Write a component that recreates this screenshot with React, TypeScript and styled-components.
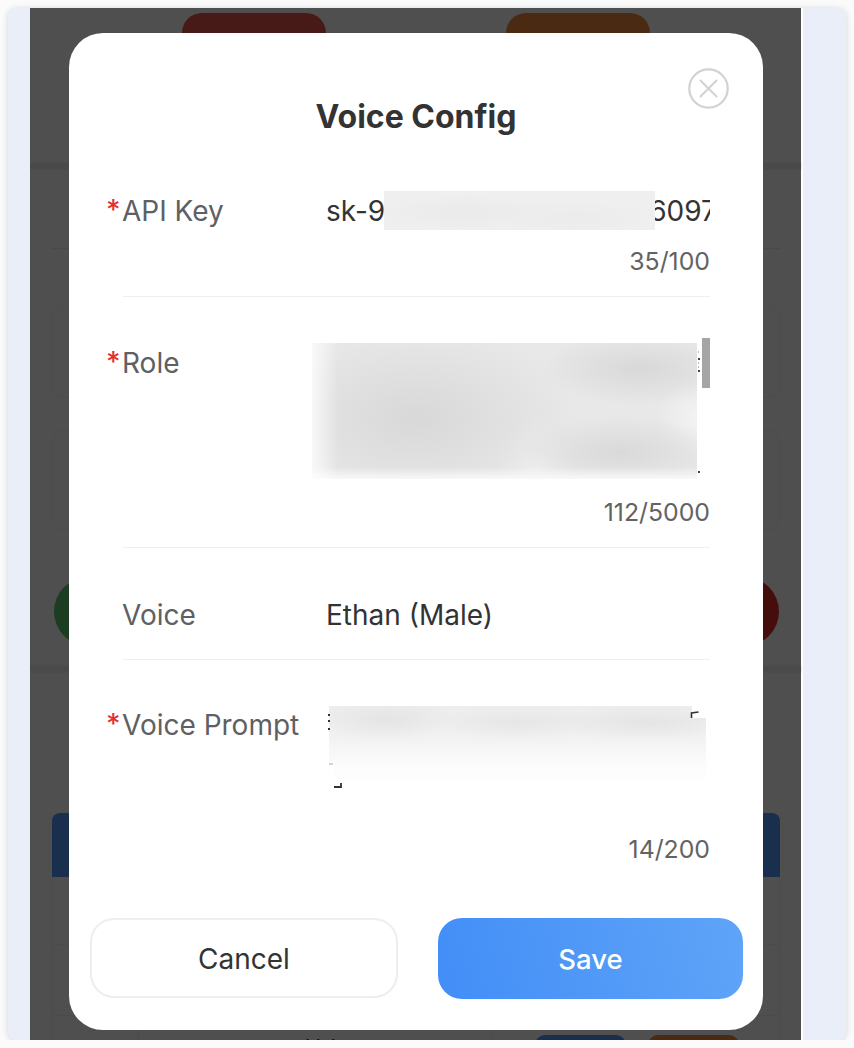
import React from "react";
import styled, { createGlobalStyle } from "styled-components";

const Global = createGlobalStyle`
  html, body { margin: 0; padding: 0; background: #fbfbfb; }
  body { font-family: Inter, "Noto Sans", "Liberation Sans", sans-serif; }
  * { box-sizing: border-box; }
`;

const Shell = styled.div`
  width: 838px; height: 1032px; margin: 8px 0 0 8px;
  background: #e9eef8; border-radius: 8px; overflow: hidden;
  box-shadow: 0 1px 7px rgba(0,0,0,.16);
  padding-left: 22px;
`;
const Stage = styled.div`
  position: relative; width: 773px; height: 1032px; overflow: hidden;
  background: #fff; border-right: 1px solid #fff;
`;
const Backdrop = styled.div`
  position: absolute; inset: 0 1px 0 0; background: rgba(0,0,0,.69);
`;

/* page behind the dialog */
const TopBar = styled.div`
  height: 154px; padding: 5px 0 0 152px; display: flex; gap: 180px;
`;
const Pill = styled.div<{ $c: string }>`
  width: 144px; height: 80px; border-radius: 20px; background: ${p => p.$c};
`;
const Band = styled.div`
  height: 8px;
  background: linear-gradient(180deg, #f4f4f4, #eaeaea 50%, #f4f4f4);
`;
const Section = styled.div`padding: 78px 21px 0;`;
const Rule = styled.div`height: 1px; background: #eaeaea;`;
const Card = styled.div<{ $h: number; $m: number }>`
  height: ${p => p.$h}px; margin-top: ${p => p.$m}px;
  border: 1px solid #f1f1f1; border-radius: 14px;
`;
const Circles = styled.div`
  display: flex; justify-content: space-between; padding: 47px 2px 0 3px;
`;
const Circle = styled.div<{ $c: string }>`
  width: 69px; height: 69px; border-radius: 50%; background: ${p => p.$c};
`;
const Gap = styled.div<{ $h: number }>`height: ${p => p.$h}px;`;
const TableHead = styled.div`
  height: 64px; margin: 0 22px 0 22px; background: #5494fc; border-radius: 8px 8px 0 0;
`;
const TableRow = styled.div<{ $h: number }>`
  height: ${p => p.$h}px; margin: 0 22px; display: grid; grid-template-columns: 86px 353px 1fr;
  border: 1px solid #f2f2f2; border-top: 0;
`;
const Cell = styled.div<{ $left?: number; $top?: number }>`
  border-right: 1px solid #f2f2f2; display: flex; gap: 22px;
  padding: ${p => p.$top ?? 19}px 0 0 ${p => p.$left ?? 43}px;
  font-size: 20px; color: #222; line-height: 24px;
  &:last-child { border-right: 0; }
`;
const SmallBtn = styled.div<{ $c: string }>`
  width: 91px; height: 40px; border-radius: 10px; background: ${p => p.$c}; flex: none;
`;

/* dialog */
const Modal = styled.div`
  position: absolute; left: 39px; top: 25px; width: 694px; height: 997px;
  background: #fff; border-radius: 34px;
`;
const Header = styled.div`
  height: 137px; padding-top: 63px; text-align: center;
  font-size: 32px; line-height: 42px; font-weight: 700; color: #333;
`;
const CloseButton = styled.button`
  position: absolute; top: 35px; right: 34.5px; width: 41px; height: 41px;
  padding: 0; border: 0; background: none; display: block;
`;
const Row = styled.div<{ $top: number; $bottom: number; $noRule?: boolean }>`
  margin: 0 53px 0 54px; padding: ${p => p.$top}px 0 ${p => p.$bottom}px;
  display: grid; grid-template-columns: 204px 1fr;
  border-bottom: ${p => (p.$noRule ? "0" : "1px solid #efefef")};
`;
const Label = styled.div<{ $offset?: number }>`
  margin-top: ${p => p.$offset ?? 0}px; margin-left: -1px;
  font-size: 28px; line-height: 34px; color: #5f6063; white-space: nowrap;
`;
const Star = styled.span`
  display: inline-block; width: 16px; margin-left: -16px;
  color: #e5302f; font-size: 28px; font-weight: 500; line-height: 34px;
  vertical-align: top; position: relative; top: -1px;
`;
const Field = styled.div`min-width: 0; margin-left: -1px;`;
const Value = styled.div`
  height: 34px; overflow: hidden; white-space: nowrap;
  font-size: 28px; line-height: 34px; color: #333;
`;
const MaskedRun = styled.span`display: inline-block; width: 264px;`;
const Box = styled.div<{ $h: number }>`position: relative; height: ${p => p.$h}px;`;
const Counter = styled.div<{ $top: number }>`
  margin-top: ${p => p.$top}px; text-align: right;
  font-size: 24.8px; line-height: 34px; color: #636363;
`;
const KeyRedaction = styled.div`
  position: absolute; left: 58px; top: -3px; width: 271px; height: 39px;
  background:
    radial-gradient(ellipse 90px 18px at 30% 55%, #eaeaea, transparent),
    radial-gradient(ellipse 80px 18px at 70% 70%, #ebebeb, transparent),
    #efefef;
`;
const RoleRedaction = styled.div`
  position: absolute; left: -14px; top: 5px; width: 385px; height: 136px;
  background:
    linear-gradient(90deg, rgba(255,255,255,.75) 0, rgba(255,255,255,0) 26px),
    linear-gradient(0deg, #f8f8f8 0, rgba(248,248,248,0) 12px),
    radial-gradient(ellipse 160px 90px at 27% 55%, #d8d8d8, transparent),
    radial-gradient(ellipse 100px 36px at 85% 19%, #d8d8d8, transparent),
    radial-gradient(ellipse 100px 36px at 80% 80%, #d9d9d9, transparent),
    radial-gradient(ellipse 40px 40px at 100% 55%, #f3f3f3, transparent),
    radial-gradient(ellipse 40px 50px at 58% 92%, #efefef, transparent),
    #e8e8e8;
`;
const PromptRedaction = styled.div`
  position: absolute; left: 3px; top: -2px; width: 377px; height: 75px;
  clip-path: polygon(0 0, 363px 0, 363px 12px, 377px 12px, 377px 75px, 5px 75px, 5px 58px, 0 58px);
  background:
    radial-gradient(ellipse 70px 20px at 15% 18%, #e4e4e4, transparent),
    radial-gradient(ellipse 90px 16px at 50% 22%, #e6e6e6, transparent),
    radial-gradient(ellipse 90px 18px at 84% 22%, #e4e4e4, transparent),
    linear-gradient(180deg, #ededed 0, #f1f1f1 40%, #fbfbfb 75%, #fefefe 100%);
`;
const Thumb = styled.div`
  position: absolute; right: 0; top: 0; width: 8px; height: 50px; background: #a5a5a5;
`;
const Specks = styled.svg`
  position: absolute; left: 0; top: 0; width: 383px; height: 150px; overflow: visible; pointer-events: none;
`;
const Footer = styled.div`
  display: flex; gap: 40px; padding: 52px 20px 0 21px;
`;
const Cancel = styled.button`
  width: 308px; height: 80px; border-radius: 24px; background: #fff; padding: 2px 0 0;
  border: 2px solid #eeeef0; color: #333;
  font: 400 28px Inter, sans-serif;
`;
const Save = styled.button`
  width: 305px; height: 81px; border-radius: 24px; border: 0; color: #fff; padding: 1px 0 0;
  background: linear-gradient(75deg, #428ef7 0%, #5fa4f8 100%);
  font: 500 27.5px Inter, sans-serif;
`;

export default function App() {
  return (
    <>
      <Global />
      <Shell>
        <Stage>
          <TopBar>
            <Pill $c="#e8544c" />
            <Pill $c="#ef873a" />
          </TopBar>
          <Band />
          <Section>
            <Rule />
            <Card $h={91} $m={58} />
            <Card $h={100} $m={32} />
            <Circles>
              <Circle $c="#5ac46e" />
              <Circle $c="#df2d27" />
            </Circles>
          </Section>
          <Gap $h={19} />
          <Band />
          <Gap $h={140} />
          <TableHead />
          <TableRow $h={68}><Cell /><Cell /><Cell /></TableRow>
          <TableRow $h={71}><Cell /><Cell /><Cell /></TableRow>
          <TableRow $h={60}>
            <Cell />
            <Cell $left={167} $top={19}>Voice</Cell>
            <Cell>
              <SmallBtn $c="#5494fc" />
              <SmallBtn $c="#ef873a" />
            </Cell>
          </TableRow>
          <Backdrop />
          <Modal>
            <Header>Voice Config</Header>
            <CloseButton aria-label="Close">
              <svg width="41" height="41" viewBox="0 0 41 41" fill="none" stroke="#d0d2d6" strokeWidth="2.2">
                <circle cx="20.5" cy="20.5" r="19.2" />
                <path d="M12.5 12.5 L28.5 28.5 M28.5 12.5 L12.5 28.5" strokeLinecap="round" strokeWidth="2" />
              </svg>
            </CloseButton>

            <Row $top={24} $bottom={18}>
              <Label><Star>*</Star>API Key</Label>
              <Field>
                <Box $h={34}>
                  <Value>sk-9<MaskedRun />6097f</Value>
                  <KeyRedaction />
                </Box>
                <Counter $top={16}>35/100</Counter>
              </Field>
            </Row>

            <Row $top={41} $bottom={18}>
              <Label $offset={8}><Star>*</Star>Role</Label>
              <Field>
                <Box $h={142}>
                  <RoleRedaction />
                  <Thumb />
                  <Specks viewBox="0 0 383 150">
                    <g fill="#444">
                      <rect x="372" y="20" width="2" height="2" />
                      <rect x="372" y="32" width="2" height="2" />
                      <rect x="372" y="133" width="2" height="2" />
                    </g>
                    <g fill="#bbb">
                      <rect x="372" y="13" width="1" height="2" />
                      <rect x="372" y="24" width="1" height="2" />
                      <rect x="372" y="28" width="1" height="2" />
                    </g>
                  </Specks>
                </Box>
                <Counter $top={15}>112/5000</Counter>
              </Field>
            </Row>

            <Row $top={50} $bottom={27}>
              <Label>Voice</Label>
              <Field>
                <Value>Ethan (Male)</Value>
              </Field>
            </Row>

            <Row $top={48} $bottom={0} $noRule>
              <Label><Star>*</Star>Voice Prompt</Label>
              <Field>
                <Box $h={108}>
                  <PromptRedaction />
                  <Specks viewBox="0 0 383 150">
                    <g fill="#333">
                      <rect x="2" y="6" width="2" height="2" />
                      <rect x="2" y="12" width="2" height="2" />
                      <rect x="2" y="20" width="2" height="2" />
                    </g>
                    <path d="M3 56 H7" stroke="#aaa" strokeWidth="1" />
                    <path d="M8 79 H15 V75" stroke="#333" strokeWidth="1.8" fill="none" />
                    <path d="M365.5 10 V5 L372.5 4" stroke="#333" strokeWidth="1.6" fill="none" />
                  </Specks>
                </Box>
                <Counter $top={16}>14/200</Counter>
              </Field>
            </Row>

            <Footer>
              <Cancel>Cancel</Cancel>
              <Save>Save</Save>
            </Footer>
          </Modal>
        </Stage>
      </Shell>
    </>
  );
}
